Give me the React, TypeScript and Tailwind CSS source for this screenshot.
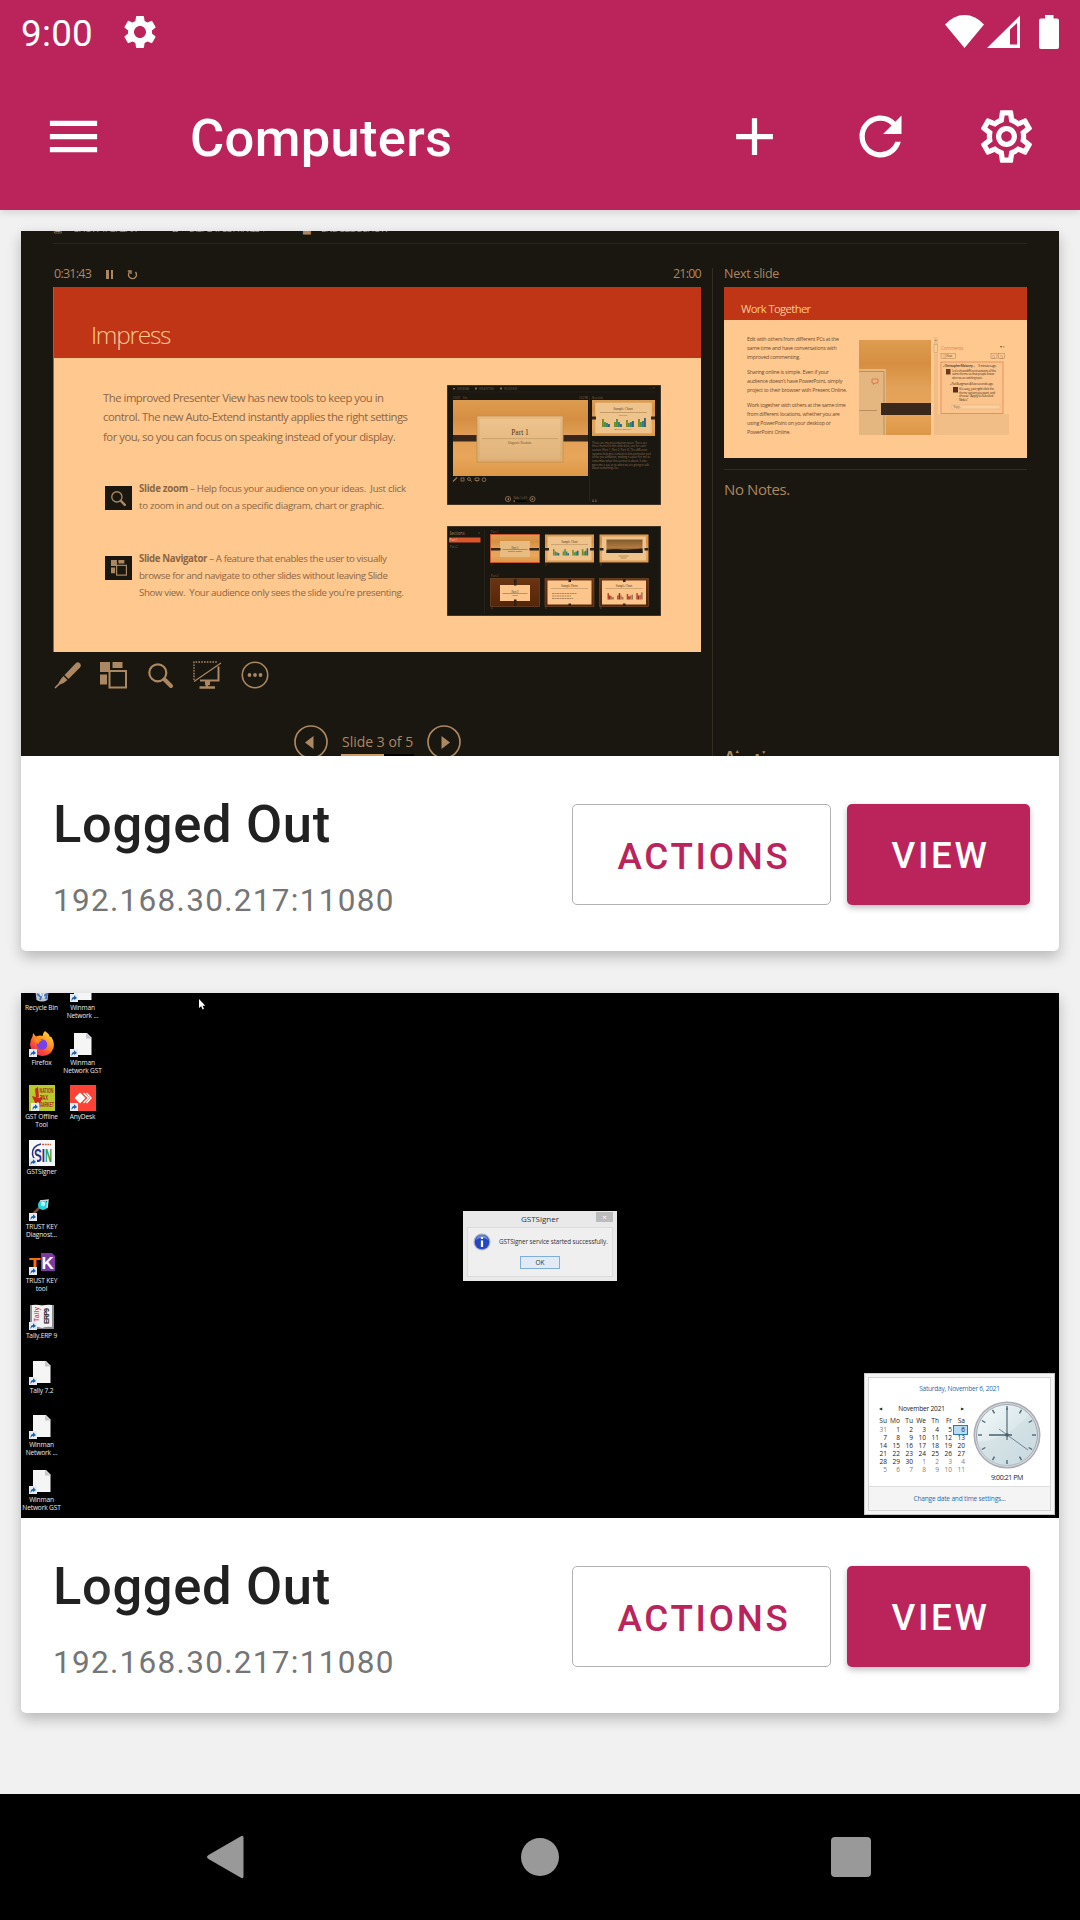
import type { ReactNode } from "react";
import { MdMenu, MdAdd, MdRefresh, MdOutlineSettings, MdSettings } from "react-icons/md";

const TAN = "#ab8861";

/* ---------- Status bar and app bar ---------- */

function StatusBar() {
  return (
    <div className="flex h-[63px] items-center justify-between pl-[21px] pr-[21px] text-white">
      <div className="flex items-center">
        <span className="w-[99px] pt-[5px] text-[36.75px] leading-[58px] tracking-[0.3px]">9:00</span>
        <MdSettings className="size-[40px]" />
      </div>
      <svg width="115" height="40" viewBox="944 11 115 40" fill="#fff">
        <path d="M964.5 47 L945 23.5 Q953.5 14 964.5 14 Q975.500 14 984 23.500 Z" />
        <path fillRule="evenodd" d="M987 47 L1020 14.500 V47 Z M1010 28.500 V43.500 H1017 V22 Z" />
        <path d="M1045 14 h8.500 v3.500 h3.500 q2 0 2 2 V46 q0 2 -2 2 H1041 q-2 0 -2 -2 V19.500 q0 -2 2 -2 h4 Z" />
      </svg>
    </div>
  );
}

function Header() {
  return (
    <header className="relative z-10 h-[210px] bg-[#bb245b] shadow-[0_2px_8px_rgba(0,0,0,0.14)]">
      <StatusBar />
      <div className="flex h-[147px] items-center pl-[42px] pr-[42px] text-white">
        <MdMenu className="size-[63px]" />
        <h1 className="ml-[85px] flex-1 pt-[2px] text-[52.5px] font-medium leading-[60px] tracking-[0.3px]">Computers</h1>
        <div className="flex gap-[63px]">
          <MdAdd className="size-[63px]" />
          <MdRefresh className="size-[63px]" />
          <MdOutlineSettings className="size-[63px]" />
        </div>
      </div>
    </header>
  );
}

/* ---------- Presenter view thumbnail ---------- */

function MiniBars({ x, y, red, s = 1 }: { x: number; y: number; red?: boolean; s?: number }) {
  const heights = [
    [8, 5, 4, 3],
    [5, 8, 5, 3],
    [7, 4, 5, 6],
    [8, 5, 6, 9],
  ];
  const colors = red
    ? ["#b8452a", "#8e2f22", "#c76a44", "#8f7a62"]
    : ["#7d8a1c", "#4f8f4a", "#2f7f74", "#3b5f80"];
  return (
    <g transform={`translate(${x} ${y}) scale(${s})`}>
      {heights.map((set, i) =>
        set.map((h, j) => (
          <rect key={`${i}-${j}`} x={i * 12 + j * 2} y={-h} width="1.9" height={h} fill={colors[j]} />
        ))
      )}
    </g>
  );
}

function Wood({ x, y, w, h, dark }: { x: number; y: number; w: number; h: number; dark?: boolean }) {
  return <rect x={x} y={y} width={w} height={h} fill={dark ? "url(#woodDark)" : "url(#wood)"} />;
}

function Defs() {
  return (
    <defs>
      <linearGradient id="wood" x1="0" y1="0" x2="0" y2="1">
        <stop offset="0" stopColor="#dd9c50" />
        <stop offset="0.25" stopColor="#d68f42" />
        <stop offset="0.5" stopColor="#e2a158" />
        <stop offset="0.75" stopColor="#e8a65a" />
        <stop offset="1" stopColor="#dc9746" />
      </linearGradient>
      <linearGradient id="woodDark" x1="0" y1="0" x2="0" y2="1">
        <stop offset="0" stopColor="#6b3413" />
        <stop offset="1" stopColor="#552508" />
      </linearGradient>
      <linearGradient id="paper" x1="0" y1="0" x2="0" y2="1">
        <stop offset="0" stopColor="#efc48d" />
        <stop offset="1" stopColor="#dfb37a" />
      </linearGradient>
      <linearGradient id="sunset" x1="0" y1="0" x2="0" y2="1">
        <stop offset="0" stopColor="#80592f" />
        <stop offset="0.6" stopColor="#b27a3f" />
        <stop offset="1" stopColor="#1e1a14" />
      </linearGradient>
    </defs>
  );
}

function PresenterMini() {
  return (
    <svg width="214" height="120" viewBox="447 385 214 120" className="block font-['Open_Sans']">
      <Defs />
      <rect x="447" y="385" width="214" height="120" fill="#1a1610" stroke="#6d5338" strokeWidth="1" />
      <g fill="#80664a" fontSize="3">
        <rect x="453" y="388" width="2" height="1.500" />
        <text x="457" y="389.700" textLength="12" lengthAdjust="spacingAndGlyphs">SHOW TASKBAR</text>
        <rect x="475" y="387.500" width="2" height="2" />
        <text x="479" y="389.700" textLength="15" lengthAdjust="spacingAndGlyphs">DISPLAY SETTINGS</text>
        <rect x="500" y="387.500" width="2" height="2" />
        <text x="504" y="389.700" textLength="13" lengthAdjust="spacingAndGlyphs">END SLIDE SHOW</text>
        <text x="453" y="398.500" textLength="7" lengthAdjust="spacingAndGlyphs">0:00:07</text>
        <text x="463" y="398.500">II ↻</text>
        <text x="579" y="398.500" textLength="9" lengthAdjust="spacingAndGlyphs">2:52 PM</text>
        <text x="592" y="398.500" textLength="11" lengthAdjust="spacingAndGlyphs">Next slide</text>
        <text x="649" y="388.500">– ▫ ×</text>
      </g>
      <path d="M453 392 H655" stroke="#2c261e" strokeWidth="0.5" />
      <Wood x={453} y={400} w={135} h={76} />
      <rect x="453" y="435" width="27" height="6.500" fill="#382619" />
      <rect x="560" y="435" width="28" height="6.500" fill="#382619" />
      <rect x="477" y="416" width="86" height="46" fill="url(#paper)" stroke="#c59251" strokeWidth="1" />
      <rect x="479" y="418" width="82" height="42" fill="none" stroke="#d0a269" strokeWidth="0.6" />
      <path d="M482 438.600 H558" stroke="#c09664" strokeWidth="0.7" />
      <text x="520" y="435" fontSize="7.500" fill="#51351c" textAnchor="middle" className="font-['Liberation_Serif']">Part 1</text>
      <text x="520" y="444" fontSize="3.6" fill="#79552f" textAnchor="middle" className="font-['Liberation_Serif']">Organic Routine</text>
      <path d="M589.500 398 V501" stroke="#332b21" strokeWidth="0.6" />
      <Wood x={592} y={400} w={63} h={36} />
      <rect x="595" y="402.500" width="57" height="31" fill="#efc48c" stroke="#d5a566" strokeWidth="0.6" />
      <rect x="592" y="416.500" width="4" height="3" fill="#33241a" />
      <rect x="651" y="416.500" width="4" height="3" fill="#33241a" />
      <text x="623" y="410" fontSize="3.600" fill="#5f4224" textAnchor="middle" className="font-['Liberation_Serif']">Sample Chart</text>
      <path d="M600 412.500 H647" stroke="#9b7447" strokeWidth="0.5" />
      <MiniBars x={602} y={427} />
      <text x="623" y="415.500" fontSize="1.800" fill="#79552f" textAnchor="middle">Chart Title</text>
      <text x="623" y="430" fontSize="1.800" fill="#79552f" textAnchor="middle">■ Series 1 ■ Series 2</text>
      <g fill="#97785a" fontSize="3">
        <text x="592" y="443.500" textLength="55" lengthAdjust="spacingAndGlyphs">These are my presentation notes. There are</text>
        <text x="592" y="447.200" textLength="54" lengthAdjust="spacingAndGlyphs">three themes in this slide deck, one for each</text>
        <text x="592" y="450.900" textLength="55" lengthAdjust="spacingAndGlyphs">section (Part 1, Part 2, Part 3). The different</text>
        <text x="592" y="454.600" textLength="59" lengthAdjust="spacingAndGlyphs">variants help give context to this particular part</text>
        <text x="592" y="458.300" textLength="58" lengthAdjust="spacingAndGlyphs">of the presentation, making it easier for me to</text>
        <text x="592" y="462" textLength="55" lengthAdjust="spacingAndGlyphs">remember what this section is about. It also</text>
        <text x="592" y="465.700" textLength="57" lengthAdjust="spacingAndGlyphs">gives me a cue as to when we are going to talk</text>
        <text x="592" y="469.400" textLength="27" lengthAdjust="spacingAndGlyphs">about something else.</text>
      </g>
      <g stroke="#97785a" fill="none" strokeWidth="0.8">
        <path d="M453 481.500 l4 -4" strokeWidth="1.200" />
        <rect x="461" y="478" width="3" height="3" />
        <circle cx="469" cy="479" r="1.500" />
        <path d="M470 480 l1.800 1.800" />
        <path d="M475 478 h4 v2.500 h-4 Z M477 480.500 v1.500" />
        <circle cx="484" cy="479.700" r="1.900" />
        <circle cx="508" cy="499" r="2.600" />
        <circle cx="532.500" cy="499" r="2.600" />
      </g>
      <path d="M509 497.500 v3 l-2 -1.500 Z M531.700 497.500 v3 l2 -1.500 Z" fill="#97785a" />
      <text x="513.500" y="499" fontSize="3" fill="#97785a" textLength="13.500" lengthAdjust="spacingAndGlyphs">Slide 1 of 5</text>
      <rect x="513.500" y="500.500" width="13" height="1.200" fill="#000" />
      <rect x="513.500" y="500.500" width="1.600" height="1.200" fill={TAN} />
      <text x="592" y="502" fontSize="3" fill="#97785a">A  A</text>
    </svg>
  );
}

function NavSlide({
  x,
  y,
  kind,
  dark,
}: {
  x: number;
  y: number;
  kind: "title" | "chart" | "photo" | "text";
  dark?: boolean;
}) {
  const full = kind !== "title";
  return (
    <g>
      <Wood x={x} y={y} w={49} h={28} dark={dark} />
      {full ? (
        <rect x={x + 2.500} y={y + 2} width="44" height="24" fill={dark ? "#fbc58c" : "#efc48c"} />
      ) : (
        <rect x={x + 9.500} y={y + 6.500} width="30" height="16" fill={dark ? "#fbc58c" : "#e8bb80"} />
      )}
      {dark ? (
        <>
          <rect x={x + 23.500} y={y} width="2.500" height={full ? 3.500 : 7} fill="#2c2018" />
          <rect x={x + 23.500} y={full ? y + 25 : y + 21} width="2.500" height={full ? 3 : 7} fill="#2c2018" />
        </>
      ) : (
        <>
          <rect x={x} y={y + 13.500} width={full ? 4 : 10} height="2.500" fill="#33241a" />
          <rect x={full ? x + 45 : x + 39} y={y + 13.500} width={full ? 4 : 10} height="2.500" fill="#33241a" />
        </>
      )}
      {dark && <rect x={x} y={y} width="49" height="28" fill="none" stroke="#7a4f2c" strokeWidth="0.6" />}
      {kind === "title" && (
        <>
          <text x={x + 24.500} y={y + 14} fontSize="3" fill="#5a3b1e" textAnchor="middle" className="font-['Liberation_Serif']">
            {dark ? "Part 2" : "Part 1"}
          </text>
          <path d={`M${x + 12} ${y + 15} h25`} stroke="#7b5831" strokeWidth="0.5" />
          <text x={x + 24.500} y={y + 17.700} fontSize="2" fill="#5a3b1e" textAnchor="middle">
            {dark ? "Citrus" : "Organic Theme"}
          </text>
        </>
      )}
      {kind === "chart" && (
        <>
          <text x={x + 24.500} y={y + 8} fontSize="3" fill="#5a3b1e" textAnchor="middle" className="font-['Liberation_Serif']">Sample Chart</text>
          <path d={`M${x + 6} ${y + 10} h37`} stroke="#9b7447" strokeWidth="0.4" />
          <MiniBars x={x + 8} y={y + 21} red={dark} s={0.8} />
        </>
      )}
      {kind === "text" && (
        <>
          <text x={x + 24.500} y={y + 8} fontSize="3" fill="#5a3b1e" textAnchor="middle" className="font-['Liberation_Serif']">Sample Photo</text>
          <path d={`M${x + 6} ${y + 10} h37`} stroke="#9b7447" strokeWidth="0.4" />
          <path d={`M${x + 7} ${y + 15} h25 M${x + 7} ${y + 17.500} h19 M${x + 7} ${y + 20} h21`} stroke="#8d683f" strokeWidth="0.7" strokeDasharray="2 0.5" />
        </>
      )}
      {kind === "photo" && (
        <>
          <rect x={x + 7} y={y + 5} width="36" height="13.500" fill="url(#sunset)" />
          <path d={`M${x + 7} ${y + 15.500} q9 -1.500 18 0 q9 -1 18 -1.500 v4.500 h-36 Z`} fill="#211b14" />
          <path d={`M${x + 19} ${y + 21.500} h10 M${x + 21} ${y + 23.500} h6`} stroke="#8d683f" strokeWidth="0.6" />
        </>
      )}
    </g>
  );
}

function NavigatorMini() {
  return (
    <svg width="214" height="90" viewBox="447 526 214 90" className="block font-['Open_Sans']">
      <rect x="447" y="526" width="214" height="90" fill="#1a1610" stroke="#6d5338" strokeWidth="1" />
      <text x="449.500" y="534.500" fontSize="4.600" fill={TAN} textLength="15" lengthAdjust="spacingAndGlyphs">Sections</text>
      <text x="478" y="534" fontSize="3" fill={TAN}>×</text>
      <rect x="449" y="537.500" width="31.500" height="5" fill="#dc552b" />
      <g fontSize="2.800">
        <text x="450" y="541.200" fill="#ffd0a0">Part 1</text>
        <text x="450" y="547.500" fill="#80664a">Part 2</text>
        <text x="491" y="532.500" fill="#80664a">Part 1</text>
        <text x="491" y="576.500" fill="#80664a">Part 2</text>
        <text x="491" y="565.500" fill="#c0462a">1</text>
        <text x="545" y="565.500" fill="#80664a">2</text>
        <text x="600" y="565.500" fill="#80664a">3</text>
        <text x="491" y="609.300" fill="#80664a">4</text>
        <text x="545" y="609.300" fill="#80664a">5</text>
        <text x="600" y="609.300" fill="#80664a">6</text>
      </g>
      <path d="M484.500 530 V614" stroke="#322a20" strokeWidth="0.6" />
      <NavSlide x={490.500} y={534.500} kind="title" />
      <rect x="490.500" y="534.500" width="49" height="28" fill="none" stroke="#dc552b" strokeWidth="0.8" />
      <NavSlide x={545} y={534.500} kind="chart" />
      <NavSlide x={599.500} y={534.500} kind="photo" />
      <NavSlide x={490.500} y={578.500} kind="title" dark />
      <NavSlide x={545} y={578.500} kind="text" dark />
      <NavSlide x={599.500} y={578.500} kind="chart" dark />
    </svg>
  );
}

function SlidesGlyph({ className }: { className: string }) {
  return (
    <svg viewBox="0 0 27 27" className={className} fill={TAN}>
      <path d="M0 0 h10 v10 h-10 Z M12.500 0 h10 v6 h-10 Z M0 12.500 h7 v10 h-7 Z" />
      <rect x="9.500" y="9" width="16.500" height="16.500" fill="#1a1610" stroke={TAN} strokeWidth="2" />
    </svg>
  );
}

function MagnifierGlyph({ className }: { className: string }) {
  return (
    <svg viewBox="0 0 25 25" className={className} fill="none" stroke={TAN}>
      <circle cx="9.800" cy="9.800" r="8.500" strokeWidth="2.200" />
      <path d="M16.500 16.500 L23 23" strokeWidth="4" strokeLinecap="round" />
    </svg>
  );
}

function ToolIcons() {
  return (
    <div className="flex h-[28px] items-center pl-[1px]">
      <svg width="27" height="27" viewBox="0 0 27 27" fill={TAN}>
        <path d="M22 1 q2 -1.500 4 0.500 q1.500 2 0 4 L14.500 17 L10.500 13 Z" />
        <path d="M9.500 14 L13.500 18 Q10 21.500 5.500 22.800 L1.500 26.500 L0.500 25.500 L4.300 21.500 Q6 17.200 9.500 14 Z" />
      </svg>
      <SlidesGlyph className="ml-[19px] size-[27px]" />
      <MagnifierGlyph className="ml-[21px] size-[25px]" />
      <svg width="29" height="28" viewBox="0 0 29 28" className="ml-[20px]" fill="none" stroke={TAN}>
        <path d="M1 19 V1 H25" strokeWidth="1.400" strokeDasharray="1.600 1.200" />
        <path d="M1 20.500 L28 2" strokeWidth="1.200" />
        <path d="M7 19.500 H25.500 V5.500" strokeWidth="2" />
        <path d="M14 20 V26 M6.500 26.500 H22" strokeWidth="2.600" />
        <path d="M12 22 H17" strokeWidth="4" />
      </svg>
      <svg width="28" height="28" viewBox="0 0 28 28" className="ml-[19px]">
        <circle cx="14" cy="14" r="12.700" fill="none" stroke={TAN} strokeWidth="1.600" />
        <g fill={TAN}>
          <circle cx="8.500" cy="14" r="1.900" />
          <circle cx="14" cy="14" r="1.900" />
          <circle cx="19.500" cy="14" r="1.900" />
        </g>
      </svg>
    </div>
  );
}

function RoundArrow({ next }: { next?: boolean }) {
  return (
    <svg width="34" height="34" viewBox="0 0 34 34">
      <circle cx="17" cy="17" r="16" fill="none" stroke={TAN} strokeWidth="1.700" />
      <path d={next ? "M14.500 11 V24 L23 17.500 Z" : "M19.500 11 V24 L11 17.500 Z"} fill={TAN} />
    </svg>
  );
}

function WorkPhoto() {
  return (
    <svg width="151" height="99" viewBox="859 336 151 99" className="block font-['Open_Sans']">
      <Wood x={859} y={340} w={72} h={95} />
      <path d="M859 369 H886 V435 H859 Z" fill="#e4b781" />
      <path d="M859 371.500 H884 V435 M859 410.500 H877" fill="none" stroke="#b98f5d" strokeWidth="1" />
      <path d="M872 379 h6 v4 h-3 l-1.500 1.500 v-1.500 h-1.500 Z" fill="none" stroke="#e07a4c" strokeWidth="1" />
      <rect x="881" y="403" width="50" height="12" fill="#3a281a" />
      <rect x="934" y="337" width="4" height="98" fill="#f0bd87" />
      <rect x="934" y="344.500" width="3.500" height="8" fill="#f9cc98" stroke="#c49868" strokeWidth="0.5" />
      <rect x="938" y="414" width="71" height="21" fill="#f2be88" />
      <text x="934.500" y="341" fontSize="3" fill="#84613d">▴</text>
      <text x="941" y="349.500" fontSize="5.500" fill="#e68055" textLength="22" lengthAdjust="spacingAndGlyphs">Comments</text>
      <text x="1000" y="348" fontSize="4" fill="#70502f">▾ ×</text>
      <g fill="none" stroke="#aa8057" strokeWidth="0.5">
        <rect x="941" y="353.500" width="14.500" height="5" />
        <rect x="991" y="353.500" width="6" height="5" />
        <rect x="998.500" y="353.500" width="6" height="5" />
      </g>
      <g fill="#6b4c2d" fontSize="3">
        <text x="943" y="357.300">❏ New</text>
        <text x="992" y="357.500">❏</text>
        <text x="999.500" y="357.500">❏</text>
      </g>
      <rect x="941" y="362" width="62" height="51.500" fill="#fbc48d" stroke="#de8457" strokeWidth="0.8" />
      <g fill="#4e3520" fontSize="2.900">
        <text x="943" y="367" textLength="32" lengthAdjust="spacingAndGlyphs" fontWeight="600">▪ Christopher Maloney ...</text>
        <text x="978" y="367" textLength="18" lengthAdjust="spacingAndGlyphs">3 minutes ago</text>
        <text x="952" y="371.500" textLength="44" lengthAdjust="spacingAndGlyphs">Let's show different variants of the</text>
        <text x="952" y="375.200" textLength="42" lengthAdjust="spacingAndGlyphs">same theme so that people know</text>
        <text x="952" y="379" textLength="30" lengthAdjust="spacingAndGlyphs">when we are switching topics</text>
        <text x="950" y="385.300" textLength="43" lengthAdjust="spacingAndGlyphs">▪ Pat Burgman  A few seconds ago</text>
        <text x="959" y="389.800" textLength="35" lengthAdjust="spacingAndGlyphs">It's easy, just right click the</text>
        <text x="959" y="393.500" textLength="36" lengthAdjust="spacingAndGlyphs">theme variant you want, and</text>
        <text x="959" y="397.300" textLength="34" lengthAdjust="spacingAndGlyphs">choose "Apply to Selected</text>
        <text x="959" y="401" textLength="9" lengthAdjust="spacingAndGlyphs">Slides"</text>
      </g>
      <rect x="946" y="369" width="4.500" height="5.500" fill="#6c3b1d" />
      <rect x="953" y="387" width="5" height="5.500" fill="#54301d" />
      <rect x="952" y="405" width="48" height="4" fill="#fdd09e" stroke="#dcae7b" strokeWidth="0.5" />
      <text x="953.500" y="408" fontSize="2.800" fill="#84613d">Reply...</text>
    </svg>
  );
}

function PresenterScreen() {
  return (
    <div className="flex h-[525px] flex-col overflow-hidden whitespace-nowrap bg-[#1a1610] px-[32px] font-['Open_Sans',sans-serif] text-[#ab8861]">
      <div className="flex h-[13px] w-full items-end border-b border-[#2b251d] pb-[8.500px] text-[9.500px] leading-[12px]">
        <span className="w-[21px]">▣</span>
        <span className="w-[97px] tracking-[-0.75px]">SHOW TASKBAR</span>
        <span className="w-[18px]">✿</span>
        <span className="w-[114px] tracking-[-0.75px]">DISPLAY SETTINGS ▾</span>
        <span className="w-[18px]">▟</span>
        <span className="tracking-[-0.75px]">END SLIDE SHOW</span>
      </div>
      <div className="flex flex-1">
        <div className="w-[648px]">
          <div className="mt-[18px] flex h-[25px] items-start pt-[2px] text-[12.500px] leading-[20px]">
            <span className="w-[53px] pl-px tracking-[-0.75px]">0:31:43</span>
            <span className="mt-[6px] flex gap-[2px] pr-[14px]">
              <i className="h-[9px] w-[2.500px] bg-[#ab8861]" />
              <i className="h-[9px] w-[2.500px] bg-[#ab8861]" />
            </span>
            <svg width="11" height="11" viewBox="0 0 11 11" fill="none" stroke={TAN} strokeWidth="1.400" className="mt-[5px]">
              <path d="M3 2.500 A4 4 0 1 0 8.500 3" />
              <path d="M0.800 2 H4 V5" />
            </svg>
            <span className="ml-auto tracking-[-0.75px]">21:00</span>
          </div>
          <div className="h-[365px] border-l border-[#8b6a49] bg-[#ffc88f]">
            <div className="flex h-[71px] items-end bg-[#c03515] pb-[8px] pl-[37px]">
              <span className="text-[24.500px] font-light leading-[30px] tracking-[-1.3px] text-[#ffc88f]">Impress</span>
            </div>
            <div className="flex">
              <div className="w-[393px] text-[#8b6745]">
                <p className="ml-[49px] mt-[30px] text-[11.300px] leading-[19.400px] tracking-[-0.48px]">
                  The improved Presenter View has new tools to keep you in
                  <br />
                  control. The new Auto-Extend instantly applies the right settings
                  <br />
                  for you, so you can focus on speaking instead of your display.
                </p>
                <div className="ml-[51px] mt-[34px] flex">
                  <div className="mt-[6px] flex h-[24px] w-[27px] items-center justify-center bg-[#1a1610]">
                    <MagnifierGlyph className="size-[15px]" />
                  </div>
                  <p className="ml-[7px] text-[9.700px] leading-[17px] tracking-[-0.3px]">
                    <b>Slide zoom</b> – Help focus your audience on your ideas.&nbsp; Just click
                    <br />
                    to zoom in and out on a specific diagram, chart or graphic.
                  </p>
                </div>
                <div className="ml-[51px] mt-[36px] flex">
                  <div className="mt-[6px] flex h-[24px] w-[27px] items-center justify-center bg-[#1a1610]">
                    <SlidesGlyph className="size-[16px]" />
                  </div>
                  <p className="ml-[7px] text-[9.700px] leading-[17px] tracking-[-0.38px]">
                    <b>Slide Navigator</b> – A feature that enables the user to visually
                    <br />
                    browse for and navigate to other slides without leaving Slide
                    <br />
                    Show view.&nbsp; Your audience only sees the slide you're presenting.
                  </p>
                </div>
              </div>
              <div className="flex flex-col gap-[21px] pt-[27px]">
                <PresenterMini />
                <NavigatorMini />
              </div>
            </div>
          </div>
          <div className="mt-[9px]">
            <ToolIcons />
          </div>
          <div className="mt-[36px] flex pl-[241px]">
            <RoundArrow />
            <div className="mx-[13px] w-[73px]">
              <div className="h-[29px] pl-px pt-[7px] text-[14px] leading-[20px]">Slide 3 of 5</div>
              <div className="h-[4px] bg-black">
                <div className="h-full w-[43px] bg-[#cd9c66]" />
              </div>
            </div>
            <RoundArrow next />
          </div>
        </div>
        <div className="ml-[11px] mt-[24px] w-[314px] border-l border-[#332c23] pl-[11px]">
          <div className="-mt-[6px] h-[25px] pt-[2px] text-[12.500px] leading-[20px] tracking-[-0.25px]">Next slide</div>
          <div className="h-[171px] w-[303px] bg-[#ffc88f]">
            <div className="flex h-[33px] items-end bg-[#c03515] pb-[4px] pl-[17px] text-[11.200px] leading-[15px] tracking-[-0.6px] text-[#ffc88f]">
              Work Together
            </div>
            <div className="flex pl-[23px] text-[5.300px] leading-[9.200px] tracking-[-0.22px] text-[#6b4c2e]">
              <div className="w-[112px] pt-[15px]">
                <p>
                  Edit with others from different PCs at the
                  <br />
                  same time and have conversations with
                  <br />
                  improved commenting.
                </p>
                <p className="mt-[5.300px]">
                  Sharing online is simple. Even if your
                  <br />
                  audience doesn't have PowerPoint, simply
                  <br />
                  project to their browser with Present Online.
                </p>
                <p className="mt-[5.300px]">
                  Work together with others at the same time
                  <br />
                  from different locations, whether you are
                  <br />
                  using PowerPoint on your desktop or
                  <br />
                  PowerPoint Online.
                </p>
              </div>
              <div className="pt-[16px]">
                <WorkPhoto />
              </div>
            </div>
          </div>
          <div className="mt-[11px] h-px w-[303px] bg-[#332c23]" />
          <div className="mt-[9px] text-[15px] leading-[20px] tracking-[-0.4px]">No Notes.</div>
          <div className="mt-[250px] flex items-start text-[#b08c66]">
            <span className="w-[29px] pl-px text-[14px] font-bold leading-[14px]">
              A<span className="align-top text-[5px] leading-[5px]">▲</span>
            </span>
            <span className="pt-[3px] text-[12px] font-bold leading-[14px]">
              A<span className="align-top text-[5px] leading-[0px]">▼</span>
            </span>
          </div>
        </div>
      </div>
    </div>
  );
}

/* ---------- Remote desktop thumbnail ---------- */

function Shortcut({ x = 0, y = 18 }: { x?: number; y?: number }) {
  return (
    <g>
      <rect x={x} y={y} width="8" height="8" fill="#e4ebf2" />
      <path d={`M${x + 1.500} ${y + 7} Q${x + 1.500} ${y + 3} ${x + 4} ${y + 3} V${y + 1.200} L${x + 7} ${y + 4} L${x + 4} ${y + 6} V${y + 4.800} Q${x + 2.500} ${y + 5} ${x + 1.500} ${y + 7} Z`} fill="#1f5fae" />
    </g>
  );
}

function Glyph({ children }: { children: ReactNode }) {
  return (
    <svg width="26" height="26" viewBox="0 0 26 26" className="block">
      {children}
    </svg>
  );
}

function DocIcon() {
  return (
    <Glyph>
      <path d="M4 2 H17 L21.500 6.500 V24 H4 Z" fill="#f5f5f6" />
      <path d="M16 2 V7.500 H21.500 Z" fill="#c4c6c9" />
      <Shortcut />
    </Glyph>
  );
}

const icons: Record<string, ReactNode> = {
  bin: (
    <Glyph>
      <path d="M5 4 H21 L18.500 24 Q13 27 7.500 24 Z" fill="#bcc5cf" />
      <path d="M8 18 L12 21 L11 24 M14 20 L18 18 L17 23" stroke="#3f74c0" strokeWidth="1.800" fill="none" />
      <path d="M10 10 L12 20 M16 12 L14 22" stroke="#eef2f5" />
    </Glyph>
  ),
  doc: <DocIcon />,
  firefox: (
    <Glyph>
      <defs>
        <linearGradient id="ff" x1="0.9" y1="0" x2="0.2" y2="1">
          <stop offset="0" stopColor="#ffe14a" />
          <stop offset="0.4" stopColor="#ff9a1f" />
          <stop offset="0.75" stopColor="#ff4238" />
          <stop offset="1" stopColor="#e3206f" />
        </linearGradient>
      </defs>
      <path d="M16 0 Q20 2.500 21 6 L22 5.500 Q26 11 24.500 17 Q21.500 25 13 25 Q2.500 24 1 14 Q1 9 3.500 5.500 L4 2 L7 5.500 Q11 4 13.500 5 Q13.500 2 16 0 Z" fill="url(#ff)" />
      <circle cx="13" cy="13.500" r="5.300" fill="#7542e5" />
      <path d="M5 8 Q10 6.500 13 9.500 Q10 10 9.500 13 Q6 12 5 8 Z" fill="#ff8d1d" />
      <Shortcut />
    </Glyph>
  ),
  gst: (
    <Glyph>
      <rect width="26" height="26" fill="#b8c92c" />
      <path d="M6 4 L9 2 L10 12 L7 13 Z M3 11 L10 13 L14 11 L11 19 L7 20 Z" fill="#c92a1c" />
      <path d="M8 17 L13 19 L9 24 Z" fill="#f7efe0" />
      <g fill="#a3301c" fontSize="7" fontWeight="700" className="font-['Liberation_Sans']">
        <text x="10.500" y="8" textLength="14" lengthAdjust="spacingAndGlyphs">NATION</text>
        <text x="11" y="15" textLength="8" lengthAdjust="spacingAndGlyphs">TAX</text>
        <text x="10" y="22" textLength="15" lengthAdjust="spacingAndGlyphs">MARKET</text>
      </g>
      <Shortcut x={2} />
    </Glyph>
  ),
  anydesk: (
    <Glyph>
      <rect width="26" height="26" fill="#fb4234" />
      <path d="M10 7.500 L15.500 13 L10 18.500 L4.500 13 Z" fill="#fff" />
      <path d="M13.500 8 L18.500 13 L13.500 18 M16.500 8 L21 13 L16.500 18" fill="none" stroke="#fff" strokeWidth="1.400" />
      <Shortcut />
    </Glyph>
  ),
  signer: (
    <Glyph>
      <rect width="26" height="26" fill="#f6f8f7" />
      <path d="M12 4 Q3 6 3.500 14 Q4 19 8 20" fill="none" stroke="#2a2f84" strokeWidth="1.500" />
      <g fontWeight="700" className="font-['Liberation_Sans']">
        <text x="5" y="22" fontSize="18" fill="#2a2f84" textLength="11" lengthAdjust="spacingAndGlyphs">SI</text>
        <text x="16" y="22" fontSize="18" fill="#2f9b4c" textLength="7" lengthAdjust="spacingAndGlyphs">N</text>
      </g>
      <path d="M13 4.500 H22" stroke="#d0603f" strokeWidth="1.500" strokeDasharray="2 0.700" />
      <Shortcut />
    </Glyph>
  ),
  diag: (
    <Glyph>
      <path d="M4 19 L11 12" stroke="#7c4a2a" strokeWidth="2.500" />
      <circle cx="14" cy="10" r="5" fill="#23d5d8" />
      <path d="M11 6 L19 5 L18 13" stroke="#ccd4d6" strokeWidth="1.500" fill="none" />
      <circle cx="14" cy="9" r="2.200" fill="#b5ffff" />
      <Shortcut />
    </Glyph>
  ),
  tk: (
    <Glyph>
      <path d="M12 4 H23 L26 7 V22 H12 Z" fill="#7a3aa0" />
      <g fontWeight="700" className="font-['Liberation_Sans']">
        <text x="0" y="22" fontSize="19" fill="#f07014">T</text>
        <text x="12.500" y="20" fontSize="17" fill="#fff">K</text>
      </g>
      <Shortcut />
    </Glyph>
  ),
  tally: (
    <Glyph>
      <path d="M1 1 H25 V25 H1 Z" fill="#8a8c90" />
      <path d="M3 1 Q9 0 13 2 Q18 0 23 1 V23 Q18 22 13 24 Q8 22 3 23 Z" fill="#f2f2f2" />
      <g fontSize="7" className="font-['Liberation_Sans']">
        <text transform="translate(10 18) rotate(-90)" fill="#bf2638" textLength="15">Tally</text>
        <text transform="translate(20 20) rotate(-90)" fill="#222" fontWeight="700" textLength="16">ERP9</text>
      </g>
      <Shortcut />
    </Glyph>
  ),
};

const firstColumn: [string, string[]][] = [
  ["bin", ["Recycle Bin"]],
  ["firefox", ["Firefox"]],
  ["gst", ["GST Offline", "Tool"]],
  ["signer", ["GSTSigner"]],
  ["diag", ["TRUST KEY", "Diagnost..."]],
  ["tk", ["TRUST KEY", "tool"]],
  ["tally", ["Tally.ERP 9"]],
  ["doc", ["Tally 7.2"]],
  ["doc", ["Winman", "Network ..."]],
  ["doc", ["Winman", "Network GST"]],
];

const secondColumn: [string, string[]][] = [
  ["doc", ["Winman", "Network ..."]],
  ["doc", ["Winman", "Network GST"]],
  ["anydesk", ["AnyDesk"]],
];

function IconColumn({ items }: { items: [string, string[]][] }) {
  return (
    <div className="-mt-[17px] flex w-[41px] flex-col">
      {items.map(([icon, lines], i) => (
        <div key={i} className="flex h-[54.670px] shrink-0 flex-col items-center whitespace-nowrap">
          {icons[icon]}
          <div className="mt-[2px] text-center text-[6.600px] leading-[8px] tracking-[-0.15px] text-[#ececec]">
            {lines.map((line) => (
              <div key={line}>{line}</div>
            ))}
          </div>
        </div>
      ))}
    </div>
  );
}

function SignerDialog() {
  return (
    <div className="absolute left-[442px] top-[218px] h-[70px] w-[154px] bg-[#e9e9e9] px-[4px] text-[#333]">
      <div className="flex h-[16px] items-start justify-end pt-px">
        <span className="flex-1 pl-[17px] pt-px text-center text-[8px] leading-[11px]">GSTSigner</span>
        <span className="flex h-[10px] w-[17px] items-center justify-center bg-[#bcbcbc] text-[8px] leading-none text-white">×</span>
      </div>
      <div className="flex h-[50px] flex-col border border-[#dcdcdc] bg-[#efefef] pl-[5px] pt-[5px]">
        <div className="flex items-center">
          <svg width="18" height="18" viewBox="0 0 18 18">
            <circle cx="9" cy="9" r="8.500" fill="#aab0bd" />
            <circle cx="9" cy="9" r="7.300" fill="#2447c4" />
            <path d="M3 7 Q9 2 15 7 Q14 2.500 9 2 Q4 2.500 3 7 Z" fill="#6c8ae8" />
            <path d="M9 4 v2 M9 7.500 V14" stroke="#fff" strokeWidth="2.200" />
          </svg>
          <span className="ml-[8px] whitespace-nowrap text-[6.300px] leading-[10px] tracking-[-0.1px]">GSTSigner service started successfully.</span>
        </div>
        <span className="ml-[47px] mt-[5px] flex h-[13px] w-[40px] items-center justify-center border border-[#7eadde] bg-[#e2ebf5] text-[6.500px]">OK</span>
      </div>
    </div>
  );
}

const weekdays = ["Su", "Mo", "Tu", "We", "Th", "Fr", "Sa"];
const days = [
  31, 1, 2, 3, 4, 5, 6, 7, 8, 9, 10, 11, 12, 13, 14, 15, 16, 17, 18, 19, 20, 21, 22, 23, 24, 25, 26, 27, 28, 29, 30, 1,
  2, 3, 4, 5, 6, 7, 8, 9, 10, 11,
];

function Clock() {
  return (
    <svg width="68" height="68" viewBox="-34 -34 68 68" className="block">
      <defs>
        <linearGradient id="face" x1="0" y1="0" x2="1" y2="1">
          <stop offset="0" stopColor="#f4fafb" />
          <stop offset="1" stopColor="#c4d6dc" />
        </linearGradient>
      </defs>
      <circle r="33.500" fill="#a9acb4" />
      <circle r="32" fill="#d8dae0" />
      <circle r="30.500" fill="url(#face)" stroke="#8f979f" strokeWidth="0.8" />
      <path d="M-30 7 Q0 5 22 -20 A30 30 0 0 1 26 15 A30 30 0 0 1 -30 7 Z" fill="#cbdbe0" opacity="0.5" />
      {Array.from({ length: 12 }, (_, i) => (
        <path key={i} d="M0 -29 V-25" transform={`rotate(${i * 30})`} stroke="#4f6a78" strokeWidth="1.400" />
      ))}
      <g stroke="#46606d">
        <path d="M0 5 V-27" strokeWidth="1.100" />
        <path d="M5 0 H-18" strokeWidth="1.500" />
        <path d="M-8 -6 L21 15" strokeWidth="0.7" />
      </g>
      <circle r="1.800" fill="#46606d" />
    </svg>
  );
}

function CalendarFlyout() {
  return (
    <div className="absolute left-[843px] top-[380px] h-[142px] w-[191px] border border-[#c9c9c9] bg-[#f4f4f4] p-[3px] text-[6.600px] text-[#222]">
      <div className="flex h-[134px] flex-col border border-[#d4d4d4] bg-white">
        <div className="mt-[6px] text-center leading-[10px] tracking-[-0.25px] text-[#2b6cb4]">Saturday, November 6, 2021</div>
        <div className="mt-[7px] flex h-[86px]">
          <div className="ml-[7px] w-[91px]">
            <div className="mt-[3px] flex h-[10px] items-center justify-between px-[3px] leading-[10px]">
              <span className="text-[4px]">◀</span>
              <span className="tracking-[-0.2px]">November 2021</span>
              <span className="text-[4px]">▶</span>
            </div>
            <div className="mt-[3px] grid grid-cols-7 text-right leading-[8.150px]">
              {weekdays.map((d) => (
                <span key={d} className="pb-[0.500px] pr-[2px]">{d}</span>
              ))}
              {days.map((d, i) => (
                <span
                  key={i}
                  className={
                    i === 6
                      ? "bg-[#b5dcf3] pr-[2px] outline outline-[#2f78aa]"
                      : i === 0 || i > 30
                        ? "pr-[2px] text-[#808080]"
                        : "pr-[2px]"
                  }
                >
                  {d}
                </span>
              ))}
            </div>
          </div>
          <div className="ml-[6px] flex flex-col items-center">
            <Clock />
            <span className="mt-[4px] text-[7px] leading-[10px] tracking-[-0.4px]">9:00:21 PM</span>
          </div>
        </div>
        <div className="mt-auto flex h-[24px] items-center justify-center border-t border-[#dedede] bg-[#f4f4f4] tracking-[-0.2px] text-[#2b6cb4]">
          Change date and time settings...
        </div>
      </div>
    </div>
  );
}

function DesktopScreen() {
  return (
    <div className="relative flex h-[525px] overflow-hidden bg-black font-['Open_Sans',sans-serif]">
      <IconColumn items={firstColumn} />
      <IconColumn items={secondColumn} />
      <svg width="7" height="11" viewBox="0 0 7 11" className="absolute left-[178px] top-[6px]">
        <path d="M0 0 V9 L2.200 7.200 L3.600 10.500 L5 9.800 L3.600 6.700 H6.300 Z" fill="#fff" />
      </svg>
      <SignerDialog />
      <CalendarFlyout />
    </div>
  );
}

/* ---------- Cards and page ---------- */

function ComputerCard({ children }: { children: ReactNode }) {
  return (
    <section className="h-[720px] overflow-hidden rounded-b-[5px] bg-white shadow-[0_6px_14px_rgba(0,0,0,0.24)]">
      {children}
      <div className="flex h-[195px] justify-between pl-[32px] pr-[29px]">
        <div className="pt-[38px]">
          <h2 className="text-[52.500px] font-medium leading-[60px] tracking-[0.0125em] text-[#212121]">Logged Out</h2>
          <p className="mt-[27px] text-[31.500px] leading-[40px] tracking-[0.041em] text-[#757575]">192.168.30.217:11080</p>
        </div>
        <div className="mt-[48px] flex h-[101px] gap-[16px] text-[36.750px] font-medium">
          <button className="w-[259px] rounded-[5px] border border-[#b2b2b2] pl-[5px] pt-[5px] tracking-[2.700px] text-[#bb245b]">ACTIONS</button>
          <button className="w-[183px] rounded-[5px] bg-[#bb245b] pl-[4px] pt-[3px] tracking-[2.700px] text-white shadow-[0_3px_6px_rgba(0,0,0,0.25)]">VIEW</button>
        </div>
      </div>
    </section>
  );
}

function NavigationBar() {
  return (
    <nav className="flex h-[126px] items-center bg-black">
      <svg width="38" height="44" viewBox="0 0 38 44" className="ml-[206px]" fill="#999">
        <path d="M34.500 1.500 Q37.500 -0.500 37.500 3 V41 Q37.500 44.500 34.500 42.500 L2.500 24 Q-0.500 22 2.500 20 Z" />
      </svg>
      <div className="ml-[277px] size-[38px] rounded-full bg-[#999]" />
      <div className="ml-[272px] size-[40px] rounded-[4px] bg-[#999]" />
    </nav>
  );
}

export default function App() {
  return (
    <div className="flex h-[1920px] w-[1080px] flex-col overflow-hidden bg-[#f1f1f1] font-['Roboto',sans-serif]">
      <Header />
      <main className="flex flex-1 flex-col gap-[42px] px-[21px] pt-[21px]">
        <ComputerCard>
          <PresenterScreen />
        </ComputerCard>
        <ComputerCard>
          <DesktopScreen />
        </ComputerCard>
      </main>
      <NavigationBar />
    </div>
  );
}
